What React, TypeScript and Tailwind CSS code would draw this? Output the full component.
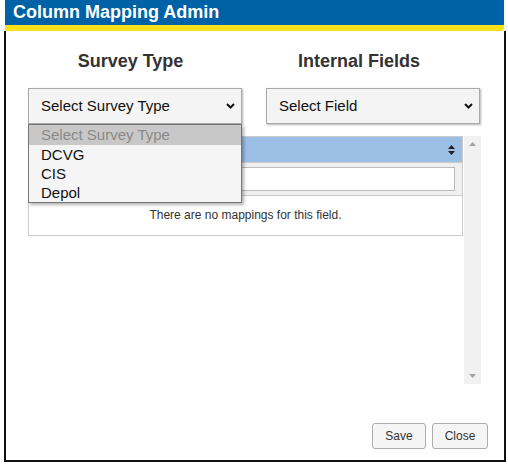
import { useState } from "react";

const surveyTypes = ["DCVG", "CIS", "Depol"];

function Chevron() {
	return (
		<svg width="9" height="6" viewBox="0 0 9 6" className="shrink-0">
			<polyline
				points="1,1 4.5,4.5 8,1"
				fill="none"
				stroke="#111"
				strokeWidth="2"
			/>
		</svg>
	);
}

function SelectBox({ label }: { label: string }) {
	return (
		<div className="h-[36px] flex items-center justify-between pl-[12px] pr-[6px] bg-[#f4f4f4] border border-[#a9a9a9] shadow-[1px_1px_2px_rgba(0,0,0,0.3)] text-[15px] text-[#111]">
			<span>{label}</span>
			<Chevron />
		</div>
	);
}

function SortIcon() {
	return (
		<svg width="7" height="10" viewBox="0 0 7 10">
			<polygon points="3.5,0 7,4 0,4" fill="#222" />
			<polygon points="0,6 7,6 3.5,10" fill="#222" />
		</svg>
	);
}

function MappingTable() {
	return (
		<div className="flex gap-[1px] pl-[22px] mt-[12px]">
			<div className="w-[435px] h-[100px] border border-[#ccc]">
				<div className="h-[26px] bg-[#9cbfe6] flex items-center justify-end pr-[7px] border-b border-[#ccc]">
					<SortIcon />
				</div>
				<div className="h-[33px] bg-[#efefef] border-b border-[#ccc] flex items-center pl-[8px] pr-[7px]">
					<div className="w-full h-[24px] bg-white border border-[#bbb]" />
				</div>
				<div className="h-[38px] flex items-center justify-center text-[12px] text-[#333]">
					There are no mappings for this field.
				</div>
			</div>
			<div className="w-[17px] h-[248px] bg-[#f1f1f1] flex flex-col items-center justify-between py-[6px]">
				<svg width="7" height="4" viewBox="0 0 7 4">
					<polygon points="3.5,0 7,4 0,4" fill="#a3a3a3" />
				</svg>
				<svg width="7" height="4" viewBox="0 0 7 4">
					<polygon points="0,0 7,0 3.5,4" fill="#a3a3a3" />
				</svg>
			</div>
		</div>
	);
}

export default function App() {
	const [selected] = useState(0);

	return (
		<div className="w-[508px] h-[467px] bg-white font-['Liberation_Sans',Arial,sans-serif]">
			<div className="ml-[4px] w-[502px] h-[462px] flex flex-col">
				<div className="ml-[1px] mr-[2px] h-[31px] bg-[#0062a6] border-b-[6px] border-[#ffe11b] rounded-br-[3px] pl-[8px]">
					<h1 className="text-white text-[18px] font-bold leading-[25px]">
						Column Mapping Admin
					</h1>
				</div>

				<div className="relative flex-1 flex flex-col border-x-2 border-b-2 border-[#111]">
					<div className="grid grid-cols-2 gap-x-[24px] pl-[22px] pr-[24px] mt-[20px]">
						<h2 className="text-center pr-[9px] text-[18px] leading-[21px] font-bold text-[#333]">
							Survey Type
						</h2>
						<h2 className="text-center pr-[28px] text-[18px] leading-[21px] font-bold text-[#333]">
							Internal Fields
						</h2>
					</div>

					<div className="grid grid-cols-2 gap-x-[24px] pl-[22px] pr-[24px] mt-[16px]">
						<SelectBox label="Select Survey Type" />
						<SelectBox label="Select Field" />
					</div>

					<MappingTable />

					<div className="mt-auto mb-[11px] mr-[16px] flex justify-end gap-[6px]">
						<button className="h-[26px] w-[54px] bg-[#f5f5f5] border border-[#adadad] rounded-[3px] text-[12px] text-[#333]">
							Save
						</button>
						<button className="h-[26px] w-[56px] bg-[#f5f5f5] border border-[#adadad] rounded-[3px] text-[12px] text-[#333]">
							Close
						</button>
					</div>

					<ul className="absolute left-[22px] top-[93px] w-[214px] bg-[#f5f5f5] border border-[#767676] shadow-[2px_2px_3px_rgba(0,0,0,0.3)] text-[15px] z-10">
						<li
							className={
								selected === 0
									? "h-[20px] leading-[20px] pl-[12px] bg-[#c8c8c8] text-[#8a8a8a]"
									: "h-[20px] leading-[20px] pl-[12px] text-[#8a8a8a]"
							}
						>
							Select Survey Type
						</li>
						{surveyTypes.map((t) => (
							<li
								key={t}
								className="h-[19px] leading-[19px] pl-[12px] text-[#111]"
							>
								{t}
							</li>
						))}
					</ul>
				</div>
			</div>
		</div>
	);
}
